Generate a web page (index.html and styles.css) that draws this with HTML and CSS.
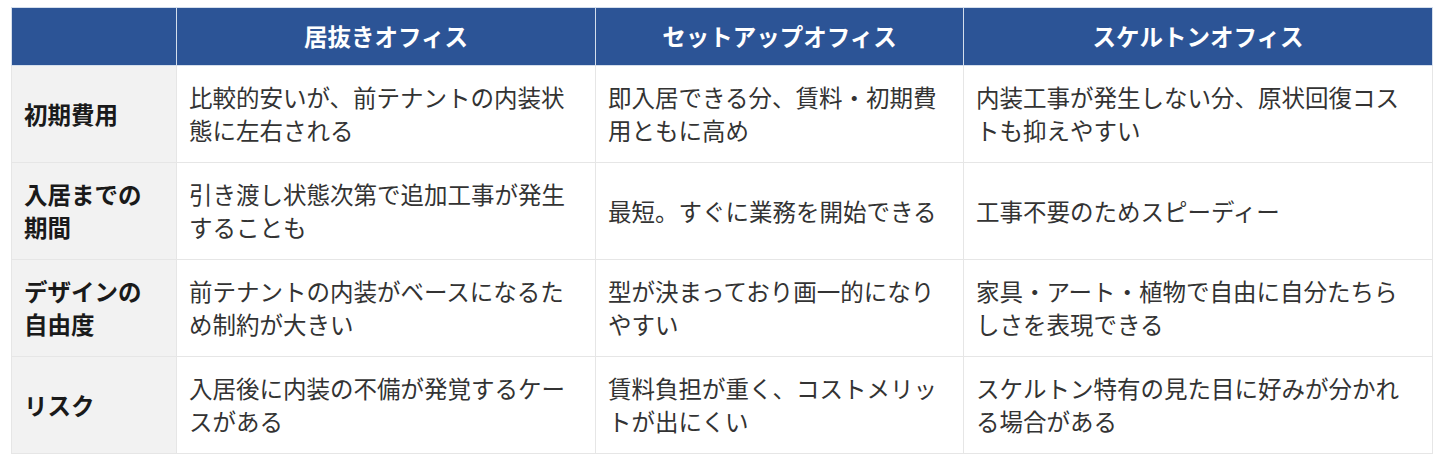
FILE: index.html
```html
<!DOCTYPE html>
<html lang="ja">
<head>
<meta charset="utf-8">
<title>オフィス比較</title>
<link rel="stylesheet" href="styles.css">
</head>
<body>
<table class="compare">
  <colgroup>
    <col class="c-label">
    <col class="c-a">
    <col class="c-b">
    <col class="c-c">
  </colgroup>
  <thead>
    <tr>
      <th class="corner"></th>
      <th>居抜きオフィス</th>
      <th>セットアップオフィス</th>
      <th>スケルトンオフィス</th>
    </tr>
  </thead>
  <tbody>
    <tr>
      <th class="label">初期費用</th>
      <td>比較的安いが、前テナントの内装状態に左右される</td>
      <td>即入居できる分、賃料・初期費用ともに高め</td>
      <td>内装工事が発生しない分、原状回復コストも抑えやすい</td>
    </tr>
    <tr>
      <th class="label">入居までの期間</th>
      <td>引き渡し状態次第で追加工事が発生することも</td>
      <td>最短。すぐに業務を開始できる</td>
      <td>工事不要のためスピーディー</td>
    </tr>
    <tr>
      <th class="label">デザインの自由度</th>
      <td>前テナントの内装がベースになるため制約が大きい</td>
      <td>型が決まっており画一的になりやすい</td>
      <td>家具・アート・植物で自由に自分たちらしさを表現できる</td>
    </tr>
    <tr>
      <th class="label">リスク</th>
      <td>入居後に内装の不備が発覚するケースがある</td>
      <td>賃料負担が重く、コストメリットが出にくい</td>
      <td>スケルトン特有の見た目に好みが分かれる場合がある</td>
    </tr>
  </tbody>
</table>
</body>
</html>
```

FILE: styles.css
```css
html, body {
  margin: 0;
  padding: 0;
  background: #ffffff;
}

body {
  padding: 7px 0 0 11px;
  font-family: "Noto Sans CJK JP", "Noto Sans", sans-serif;
  color: #333333;
}

.compare {
  border-collapse: collapse;
  table-layout: fixed;
  width: 1421px;
  font-size: 23.5px;
  line-height: 33px;
}

.c-label { width: 165px; }
.c-a { width: 419px; }
.c-b { width: 368px; }
.c-c { width: 469px; }

.compare th,
.compare td {
  border: 1px solid #e6e6e6;
  padding: 15px 14px 15px 12px;
  vertical-align: middle;
  text-align: left;
}

.compare thead th {
  background: #2c5496;
  color: #ffffff;
  font-weight: 700;
  text-align: center;
  padding: 12px 14px 12px;
  border-color: #d4deec;
}

.compare tbody .label {
  background: #f2f2f2;
  font-weight: 700;
  color: #1a1a1a;
}

.compare tbody td {
  background: #ffffff;
  font-weight: 400;
}
```
